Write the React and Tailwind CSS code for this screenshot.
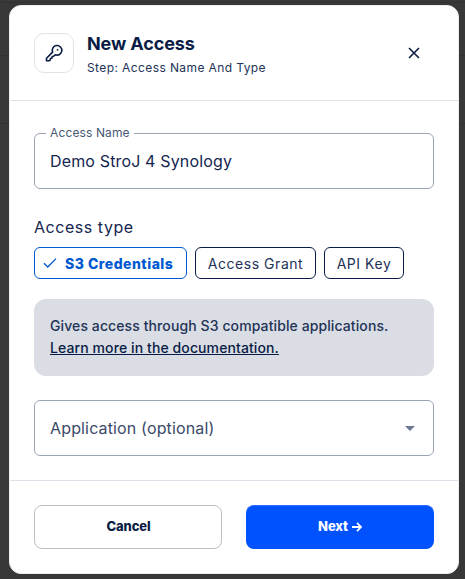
import React, { useState } from 'react';

const types = ['S3 Credentials', 'Access Grant', 'API Key'];

const chipWidths = {
  'S3 Credentials': 'w-[153px]',
  'Access Grant': 'w-[121px]',
  'API Key': 'w-[80px]',
};

function KeyIcon() {
  return (
    <svg width="18" height="18" viewBox="0 0 18 18" fill="none" stroke="#091c45" strokeWidth="1.6" strokeLinejoin="round" strokeLinecap="round">
      <path d="M7.6 8.1a4.8 4.8 0 1 1 2.7 2.7L8.6 12.2l-1.4.3-.2 1.5-1.4.4-.6 1.8-.9.5H1.5v-2.4z" />
      <circle cx="12.5" cy="5.8" r="0.9" fill="#091c45" stroke="none" />
    </svg>
  );
}

function TypeChip({ label, selected, onClick }) {
  return (
    <button
      onClick={onClick}
      className={`${chipWidths[label]} h-8 pt-px shrink-0 flex items-center rounded-md border text-sm whitespace-nowrap ${selected ? 'pl-2 border-[#0059d0] text-[#0059d0] font-extrabold tracking-[0.48px]' : 'justify-center border-[#091c45] text-[#223357] tracking-[0.54px]'}`}
    >
      {selected && (
        <svg className="mr-2 -mt-px shrink-0" width="14" height="12" viewBox="0 0 14 12" fill="none" stroke="currentColor" strokeWidth="1.3">
          <path d="M1 6.2 4.8 10 13 1.6" />
        </svg>
      )}
      {label}
    </button>
  );
}

export default function App() {
  const [name, setName] = useState('Demo StroJ 4 Synology');
  const [type, setType] = useState('S3 Credentials');

  return (
    <div className="relative h-screen bg-[#383838] pt-[5px] pl-[9px] font-[Inter,sans-serif] text-[#091c45] overflow-hidden">
      {/* Dimmed page behind the dialog */}
      <div className="absolute inset-x-0 top-0 h-[124px] flex flex-col">
        <div className="h-[3px] border-b border-[#313131]" />
        <div className="h-[53px] border-b border-[#313131]" />
        <div className="h-[68px] border-b border-[#313131]" />
      </div>

      <div className="relative w-[450px] h-[569px] flex flex-col bg-white rounded-xl border border-[#ebeef1]">
        <header className="h-[95px] shrink-0 flex items-center px-6 border-b border-[#dfe1e9]">
          <div className="size-10 flex items-center justify-center rounded-[10px] border border-[#e3e3e5]">
            <KeyIcon />
          </div>
          <div className="ml-[13px] pt-1.5 flex-1">
            <h1 className="text-lg leading-6 font-bold tracking-[-0.12px]">New Access</h1>
            <p className="text-xs leading-6 tracking-[0.4px] text-[#223357]">Step: Access Name And Type</p>
          </div>
          <button aria-label="Close" className="size-10 flex items-center justify-center">
            <svg width="12" height="12" viewBox="0 0 12 12" stroke="#091c45" strokeWidth="1.6">
              <path d="m1 1 10 10M11 1 1 11" />
            </svg>
          </button>
        </header>

        <main className="flex-1 px-6 pt-8">
          <div className="relative h-14 rounded-md border border-[#9ba4b5]">
            <label className="absolute -top-[9px] left-[11px] px-1 bg-white text-xs leading-4 tracking-[0.13px] text-[#495775]">Access Name</label>
            <input
              value={name}
              onChange={(e) => setName(e.target.value)}
              className="w-full h-full px-[15px] text-base tracking-[0.15px] text-[#142650] outline-none"
            />
          </div>

          <p className="mt-[26px] text-base leading-6 tracking-[0.54px] text-[#142650]">Access type</p>
          <div className="mt-2 flex gap-2">
            {types.map((t) => (
              <TypeChip key={t} label={t} selected={t === type} onClick={() => setType(t)} />
            ))}
          </div>

          <div className="mt-5 h-[77px] px-4 pt-4 rounded-xl bg-[#dadde4] text-sm leading-[22px] font-medium tracking-[0.1px] text-[#223357]">
            <p>Gives access through S3 compatible applications.</p>
            <a className="underline text-[#091c45]">Learn more in the documentation.</a>
          </div>

          <button className="mt-6 w-full h-14 px-[15px] flex items-center justify-between rounded-md border border-[#9ba4b5] text-base tracking-[0.15px] text-[#3a4969]">
            Application (optional)
            <svg className="mr-[3px]" width="10" height="5" viewBox="0 0 10 5" fill="#6b7892">
              <path d="m0 0 5 5 5-5z" />
            </svg>
          </button>
        </main>

        <footer className="h-[93px] shrink-0 flex gap-6 px-6 pt-6 border-t border-[#dfe1e9] text-[13px] font-extrabold tracking-[-0.13px]">
          <button className="w-[188px] h-11 pl-px shrink-0 rounded-lg border border-[#bfbfc1]">Cancel</button>
          <button className="w-[188px] h-11 pb-0.5 shrink-0 flex items-center justify-center gap-1 rounded-lg border-t border-[#2c6eff] bg-[#0052ff] text-white">
            Next
            <svg width="10" height="10" viewBox="0 0 10 10" fill="none" stroke="currentColor" strokeWidth="1.8">
              <path d="M0 5h9M5 .8 9 5 5 9.2" />
            </svg>
          </button>
        </footer>
      </div>
    </div>
  );
}
